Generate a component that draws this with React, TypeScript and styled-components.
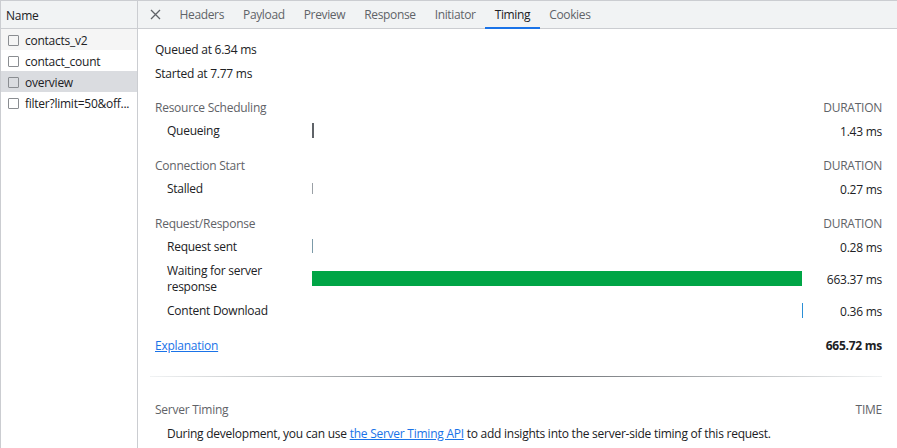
import React from 'react'
import styled, { createGlobalStyle } from 'styled-components'

const GlobalStyle = createGlobalStyle`
  html, body {
    margin: 0;
    padding: 0;
    background: #ffffff;
  }
  body {
    font-family: 'Open Sans', 'Noto Sans', sans-serif;
    font-size: 12px;
    letter-spacing: -0.25px;
    color: #202124;
  }
`

const Page = styled.div`
  display: flex;
  height: 448px;
  border-top: 1px solid #cbcdd1;
  box-sizing: border-box;
  overflow: hidden;
`

const Sidebar = styled.div`
  width: 138px;
  flex-shrink: 0;
  border-left: 1px solid #cbcdd1;
  border-right: 1px solid #cbcdd1;
  box-sizing: border-box;
  display: flex;
  flex-direction: column;
`

const SidebarHeader = styled.div`
  height: 28px;
  flex-shrink: 0;
  background: #f1f3f4;
  border-bottom: 1px solid #cbcdd1;
  display: flex;
  align-items: center;
  padding: 1px 0 0 5px;
  box-sizing: border-box;
`

const RequestRow = styled.div<{ $bg?: string }>`
  height: 21px;
  flex-shrink: 0;
  box-sizing: border-box;
  padding: 2px 0 0 7px;
  display: flex;
  align-items: center;
  gap: 6px;
  background: ${({ $bg }) => $bg || '#ffffff'};
  white-space: nowrap;
  overflow: hidden;
`

const Check = styled.span`
  width: 9px;
  height: 9px;
  margin-top: -1px;
  border: 1px solid #8a8d91;
  border-radius: 1px;
  flex-shrink: 0;
`

const Main = styled.div`
  flex: 1;
  display: flex;
  flex-direction: column;
  min-width: 0;
`

const TabBar = styled.div`
  height: 28px;
  flex-shrink: 0;
  background: #f1f3f4;
  border-bottom: 1px solid #cbcdd1;
  box-sizing: border-box;
  display: flex;
  align-items: stretch;
  padding-left: 10px;
`

const CloseButton = styled.div`
  width: 14px;
  display: flex;
  align-items: center;
  justify-content: center;
  margin-right: 8px;
  color: #5f6368;
`

const Tab = styled.div<{ $active?: boolean }>`
  padding: 1px 9.5px 0;
  display: flex;
  align-items: center;
  letter-spacing: -0.35px;
  color: ${({ $active }) => ($active ? '#202124' : '#5f6368')};
  border-bottom: 2px solid ${({ $active }) => ($active ? '#1a73e8' : 'transparent')};
  margin-bottom: -1px;
`

const Content = styled.div`
  padding: 8px 15px 0 17px;
  display: flex;
  flex-direction: column;
  flex-shrink: 0;
`

const InfoLine = styled.div`
  height: 24px;
  display: flex;
  align-items: center;
`

const Timing = styled.div`
  display: grid;
  grid-template-columns: 157px 1fr 80px;
`

const SectionTitle = styled.div`
  grid-column: 1 / 3;
  height: 24px;
  display: flex;
  align-items: center;
  color: #5f6368;
  padding-top: 10px;
`

const SectionHead = styled.div`
  height: 24px;
  display: flex;
  align-items: center;
  justify-content: flex-end;
  color: #5f6368;
  padding-top: 10px;
`

const Label = styled.div<{ $tall?: boolean }>`
  height: ${({ $tall }) => ($tall ? 40 : 24)}px;
  display: flex;
  align-items: center;
  padding-left: 12px;
  line-height: 16px;
`

const Wrap = styled.span`
  max-width: 110px;
`

const Track = styled.div`
  position: relative;
`

const Bar = styled.div<{ $color: string; $h: number; $w: number }>`
  position: absolute;
  top: 50%;
  height: ${({ $h }) => $h}px;
  width: ${({ $w }) => $w}px;
  margin-top: ${({ $h }) => -$h / 2 - 1}px;
  background: ${({ $color }) => $color};
`

const Value = styled.div`
  display: flex;
  align-items: center;
  justify-content: flex-end;
`

const Footer = styled.div`
  grid-column: 1 / 3;
  height: 24px;
  margin-top: 10px;
  display: flex;
  align-items: center;
`

const Total = styled(Value)`
  margin-top: 10px;
  font-weight: 700;
`

const Link = styled.a`
  color: #1a73e8;
  text-decoration: underline;
  cursor: pointer;
`

const Divider = styled.div`
  height: 1px;
  margin: 19px 0 0 -5px;
  background: linear-gradient(to right, #f1f3f4 0%, #5f6368 50%, #f1f3f4 100%);
`

const ServerHead = styled.div`
  margin-top: 20px;
  height: 24px;
  display: flex;
  align-items: center;
  justify-content: space-between;
  color: #5f6368;
`

const ServerNote = styled.div`
  height: 24px;
  display: flex;
  align-items: center;
  padding-left: 12px;
  white-space: nowrap;
`

type Row = {
  label: string
  value: string
  color: string
  h: number
  w: number
  left: number
  tall?: boolean
}

type Section = { title: string; rows: Row[] }

const sections: Section[] = [
  {
    title: 'Resource Scheduling',
    rows: [{ label: 'Queueing', value: '1.43 ms', color: '#5f6368', h: 15, w: 2, left: 0 }],
  },
  {
    title: 'Connection Start',
    rows: [{ label: 'Stalled', value: '0.27 ms', color: '#9aa0a6', h: 11, w: 1, left: 0 }],
  },
  {
    title: 'Request/Response',
    rows: [
      { label: 'Request sent', value: '0.28 ms', color: '#7b9aa8', h: 14, w: 1, left: 0 },
      { label: 'Waiting for server response', value: '663.37 ms', color: '#00a546', h: 15, w: 490, left: 0, tall: true },
      { label: 'Content Download', value: '0.36 ms', color: '#2b8fd6', h: 15, w: 1, left: 490 },
    ],
  },
]

const tabs = ['Headers', 'Payload', 'Preview', 'Response', 'Initiator', 'Timing', 'Cookies']

export default function App() {
  return (
    <>
      <GlobalStyle />
      <Page>
        <Sidebar>
          <SidebarHeader>Name</SidebarHeader>
          <RequestRow $bg="#f5f5f5">
            <Check />
            contacts_v2
          </RequestRow>
          <RequestRow>
            <Check />
            contact_count
          </RequestRow>
          <RequestRow $bg="#dadce0">
            <Check />
            overview
          </RequestRow>
          <RequestRow>
            <Check />
            filter?limit=50&off...
          </RequestRow>
        </Sidebar>
        <Main>
          <TabBar>
            <CloseButton>
              <svg width="11" height="11" viewBox="0 0 11 11">
                <path d="M1 1L10 10M10 1L1 10" stroke="#5f6368" strokeWidth="1.3" />
              </svg>
            </CloseButton>
            {tabs.map((t) => (
              <Tab key={t} $active={t === 'Timing'}>
                {t}
              </Tab>
            ))}
          </TabBar>
          <Content>
            <InfoLine>Queued at 6.34 ms</InfoLine>
            <InfoLine>Started at 7.77 ms</InfoLine>
            <Timing>
              {sections.map((s) => (
                <React.Fragment key={s.title}>
                  <SectionTitle>{s.title}</SectionTitle>
                  <SectionHead>DURATION</SectionHead>
                  {s.rows.map((r) => (
                    <React.Fragment key={r.label}>
                      <Label $tall={r.tall}>{r.tall ? <Wrap>{r.label}</Wrap> : r.label}</Label>
                      <Track>
                        <Bar $color={r.color} $h={r.h} $w={r.w} style={{ left: r.left }} />
                      </Track>
                      <Value>{r.value}</Value>
                    </React.Fragment>
                  ))}
                </React.Fragment>
              ))}
              <Footer>
                <Link>Explanation</Link>
              </Footer>
              <Total>665.72 ms</Total>
            </Timing>
            <Divider />
            <ServerHead>
              <span>Server Timing</span>
              <span>TIME</span>
            </ServerHead>
            <ServerNote>
              During development, you can use&nbsp;<Link>the Server Timing API</Link>&nbsp;to add insights into the
              server-side timing of this request.
            </ServerNote>
          </Content>
        </Main>
      </Page>
    </>
  )
}
